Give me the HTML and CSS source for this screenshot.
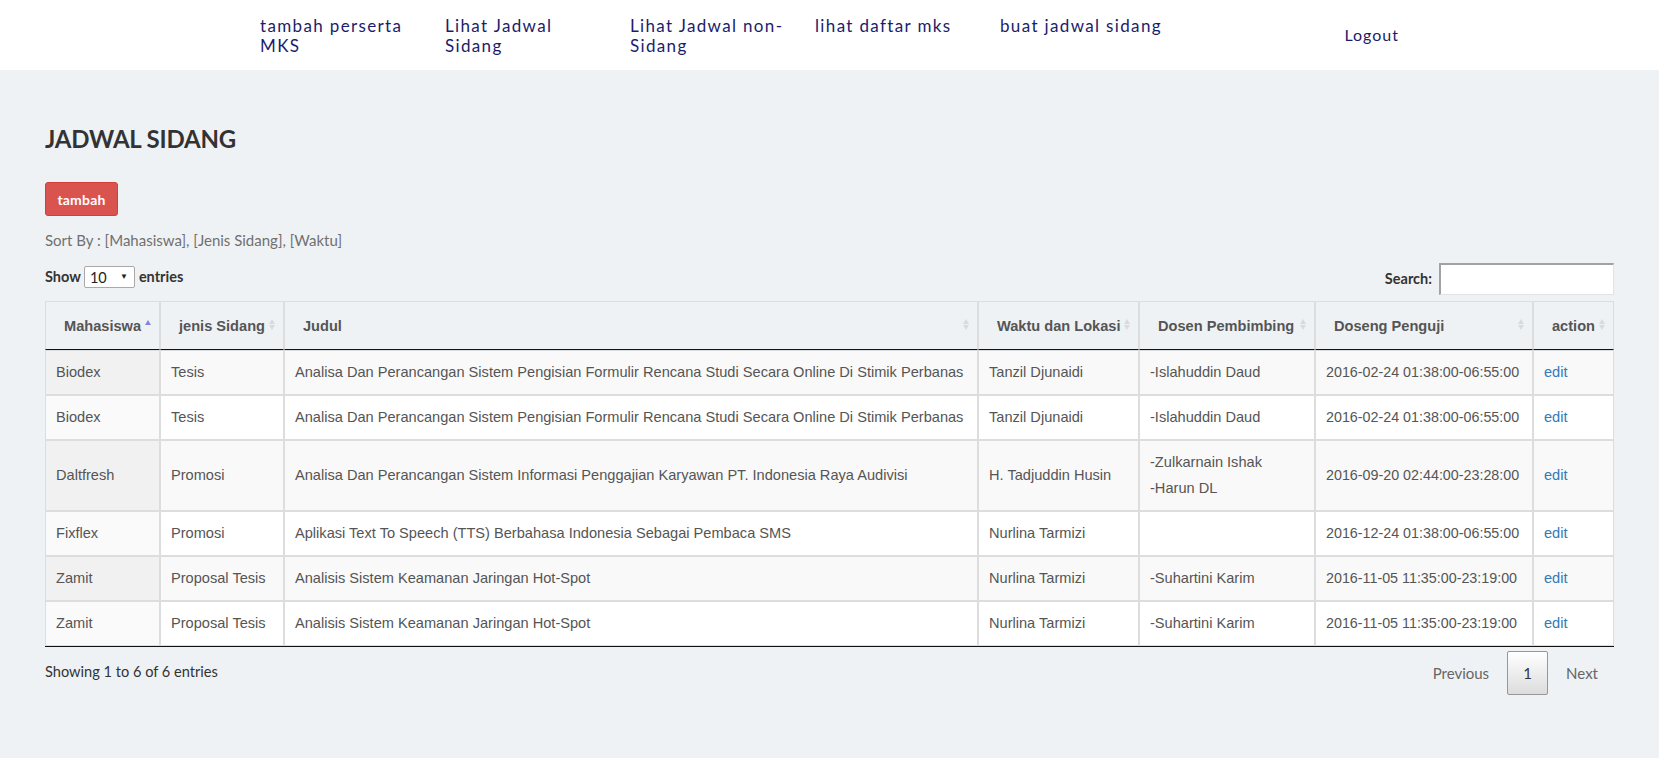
FILE: index.html
```html
<!DOCTYPE html>
<html lang="id">
<head>
<meta charset="utf-8">
<title>Jadwal Sidang</title>
<link rel="stylesheet" href="styles.css">
</head>
<body>
<header class="topbar">
  <ul class="nav">
    <li><a href="#">tambah perserta MKS</a></li>
    <li><a href="#">Lihat Jadwal Sidang</a></li>
    <li><a href="#">Lihat Jadwal non-Sidang</a></li>
    <li><a href="#">lihat daftar mks</a></li>
    <li><a href="#">buat jadwal sidang</a></li>
  </ul>
  <a class="logout" href="#">Logout</a>
</header>

<main class="content">
  <h3 class="title">JADWAL SIDANG</h3>
  <button class="btn-danger" type="button">tambah</button>
  <p class="sortby">Sort By : <a href="#">[Mahasiswa]</a>, <a href="#">[Jenis Sidang]</a>, <a href="#">[Waktu]</a></p>

  <div class="dt-top">
    <label class="dt-length">Show <span class="select-wrap"><select class="dt-select"><option>10</option><option>25</option><option>50</option><option>100</option></select><span class="select-arrow">▼</span></span> entries</label>
    <label class="dt-search">Search:<input type="search" class="search-input"></label>
  </div>

  <table class="dt">
    <thead>
      <tr>
        <th class="c1 sorted">Mahasiswa<span class="sort asc"></span></th>
        <th class="c2">jenis Sidang<span class="sort"></span></th>
        <th class="c3">Judul<span class="sort"></span></th>
        <th class="c4">Waktu dan Lokasi<span class="sort"></span></th>
        <th class="c5">Dosen Pembimbing<span class="sort"></span></th>
        <th class="c6">Doseng Penguji<span class="sort"></span></th>
        <th class="c7">action<span class="sort"></span></th>
      </tr>
    </thead>
    <tbody>
      <tr>
        <td class="s1">Biodex</td>
        <td>Tesis</td>
        <td>Analisa Dan Perancangan Sistem Pengisian Formulir Rencana Studi Secara Online Di Stimik Perbanas</td>
        <td>Tanzil Djunaidi</td>
        <td>-Islahuddin Daud</td>
        <td class="date">2016-02-24 01:38:00-06:55:00</td>
        <td><a class="edit" href="#">edit</a></td>
      </tr>
      <tr>
        <td class="s1">Biodex</td>
        <td>Tesis</td>
        <td>Analisa Dan Perancangan Sistem Pengisian Formulir Rencana Studi Secara Online Di Stimik Perbanas</td>
        <td>Tanzil Djunaidi</td>
        <td>-Islahuddin Daud</td>
        <td class="date">2016-02-24 01:38:00-06:55:00</td>
        <td><a class="edit" href="#">edit</a></td>
      </tr>
      <tr>
        <td class="s1">Daltfresh</td>
        <td>Promosi</td>
        <td>Analisa Dan Perancangan Sistem Informasi Penggajian Karyawan PT. Indonesia Raya Audivisi</td>
        <td>H. Tadjuddin Husin</td>
        <td><div class="name">-Zulkarnain Ishak</div><div class="name next">-Harun DL</div></td>
        <td class="date">2016-09-20 02:44:00-23:28:00</td>
        <td><a class="edit" href="#">edit</a></td>
      </tr>
      <tr>
        <td class="s1">Fixflex</td>
        <td>Promosi</td>
        <td>Aplikasi Text To Speech (TTS) Berbahasa Indonesia Sebagai Pembaca SMS</td>
        <td>Nurlina Tarmizi</td>
        <td></td>
        <td class="date">2016-12-24 01:38:00-06:55:00</td>
        <td><a class="edit" href="#">edit</a></td>
      </tr>
      <tr>
        <td class="s1">Zamit</td>
        <td>Proposal Tesis</td>
        <td>Analisis Sistem Keamanan Jaringan Hot-Spot</td>
        <td>Nurlina Tarmizi</td>
        <td>-Suhartini Karim</td>
        <td class="date">2016-11-05 11:35:00-23:19:00</td>
        <td><a class="edit" href="#">edit</a></td>
      </tr>
      <tr>
        <td class="s1">Zamit</td>
        <td>Proposal Tesis</td>
        <td>Analisis Sistem Keamanan Jaringan Hot-Spot</td>
        <td>Nurlina Tarmizi</td>
        <td>-Suhartini Karim</td>
        <td class="date">2016-11-05 11:35:00-23:19:00</td>
        <td><a class="edit" href="#">edit</a></td>
      </tr>
    </tbody>
  </table>

  <div class="dt-bottom">
    <div class="dt-info">Showing 1 to 6 of 6 entries</div>
    <div class="dt-paginate">
      <a class="page-btn disabled" href="#">Previous</a>
      <a class="page-btn current" href="#">1</a>
      <a class="page-btn disabled" href="#">Next</a>
    </div>
  </div>
</main>
</body>
</html>
```
FILE: styles.css
```css
* { box-sizing: border-box; }

html, body {
  margin: 0;
  padding: 0;
}

body {
  background: #eff2f5;
  font-family: Lato, "Open Sans", "Liberation Sans", sans-serif;
  font-size: 14px;
  line-height: 20px;
  color: #333;
  min-height: 758px;
}

a { text-decoration: none; }

/* ---------- top bar ---------- */
.topbar {
  background: #fff;
  height: 70px;
  display: flex;
  justify-content: space-between;
  padding: 0 260px 0 260px;
}

.nav {
  list-style: none;
  margin: 0;
  padding: 16px 0 0 0;
  display: flex;
}

.nav li {
  width: 185px;
  padding-right: 17px;
}

.nav a,
.logout {
  font-family: Lato, sans-serif;
  font-size: 17px;
  line-height: 20px;
  letter-spacing: 1.35px;
  color: #1c1c6b;
  display: block;
}

.logout {
  padding-top: 25px;
  font-size: 16px;
  letter-spacing: 1px;
}

/* ---------- content ---------- */
.content {
  padding: 56px 45px 40px 45px;
}

.title {
  margin: 0;
  font-family: Lato, sans-serif;
  font-size: 24px;
  line-height: 26px;
  font-weight: 700;
  letter-spacing: -0.2px;
  color: #333;
}

.btn-danger {
  margin-top: 30px;
  display: block;
  height: 34px;
  width: 73px;
  padding: 0;
  border: 1px solid #d43f3a;
  border-radius: 3px;
  background: #d9534f;
  color: #fff;
  font-family: Lato, sans-serif;
  font-size: 14px;
  font-weight: 700;
  letter-spacing: 0.2px;
}

.sortby {
  margin: 14px 0 0 0;
  color: #707070;
  font-size: 15px;
  line-height: 20px;
}

.sortby a { color: #707070; }

/* ---------- datatables top ---------- */
.dt-top {
  margin-top: 13px;
  display: flex;
  justify-content: space-between;
  align-items: center;
  height: 32px;
}

.dt-length,
.dt-search {
  font-weight: 700;
  font-size: 14.5px;
  color: #333;
  display: flex;
  align-items: center;
}

.dt-length { padding-bottom: 4px; }

.select-wrap {
  position: relative;
  display: inline-block;
  margin: 0 4px 0 3px;
}

.dt-select {
  -webkit-appearance: none;
  appearance: none;
  width: 51px;
  height: 22px;
  border: 1px solid #a9a9a9;
  border-radius: 2px;
  background: #fff;
  padding: 0 0 0 5px;
  font-family: Lato, sans-serif;
  font-size: 14.5px;
  color: #222;
  display: block;
}

.select-arrow {
  position: absolute;
  right: 7px;
  top: 4px;
  font-size: 8px;
  line-height: 12px;
  color: #222;
  pointer-events: none;
}

.search-input {
  margin-left: 7px;
  width: 175px;
  height: 32px;
  background: #fff;
  border: 1px solid #e3e3e3;
  border-top: 2px solid #a2a2a2;
  border-left: 2px solid #a2a2a2;
}

/* ---------- table ---------- */
.dt {
  margin-top: 6px;
  width: 100%;
  table-layout: fixed;
  border-collapse: separate;
  border-spacing: 0;
  border-bottom: 1px solid #111;
  font-family: "Liberation Sans", Arial, sans-serif;
  font-size: 14.6px;
}

.dt th,
.dt td {
  border: 1px solid #ddd;
}

.dt th {
  position: relative;
  text-align: left;
  font-weight: 700;
  color: #555;
  padding: 14px 18px 13px 18px;
  line-height: 20px;
  border-bottom-color: #111;
  white-space: nowrap;
}

.c1 { width: 115px; }
.c2 { width: 124px; }
.c3 { width: 694px; }
.c4 { width: 161px; }
.c5 { width: 176px; }
.c6 { width: 218px; }
.c7 { width: 81px; }

.sort {
  position: absolute;
  right: 7px;
  top: 17px;
  width: 7px;
  height: 11px;
}

.sort::before,
.sort::after {
  content: "";
  position: absolute;
  left: 0;
  border-left: 3.5px solid transparent;
  border-right: 3.5px solid transparent;
}

.sort::before {
  top: 0;
  border-bottom: 5px solid #dadada;
}

.sort::after {
  top: 6px;
  border-top: 5px solid #dadada;
}

.sort.asc::before { top: 1px; border-bottom-color: #8383e0; }
.sort.asc::after { display: none; }

.dt td {
  color: #555;
  padding: 11px 10px 12px 10px;
  line-height: 20px;
  vertical-align: middle;
}

.dt td.date {
  font-size: 14.3px;
  white-space: nowrap;
}

.dt tbody tr:nth-child(odd) td { background: #f9f9f9; }
.dt tbody tr:nth-child(even) td { background: #fff; }
.dt tbody tr:nth-child(odd) td.s1 { background: #f1f1f1; }
.dt tbody tr:nth-child(even) td.s1 { background: #fafafa; }

.name.next { margin-top: 6px; }

.edit { color: #337ab7; }

/* ---------- bottom ---------- */
.dt-bottom {
  margin-top: 4px;
  display: flex;
  justify-content: space-between;
  align-items: center;
  height: 44px;
}

.dt-info {
  color: #333;
  font-size: 14.6px;
  padding-bottom: 3px;
}

.dt-paginate {
  display: flex;
  align-items: center;
}

.page-btn {
  display: block;
  padding: 0 15px;
  margin-left: 2px;
  color: #666;
  font-size: 15px;
  line-height: 20px;
  border: 1px solid transparent;
}

.page-btn.current {
  width: 41px;
  height: 44px;
  padding: 0;
  display: flex;
  align-items: center;
  justify-content: center;
  color: #333;
  border: 1px solid #979797;
  border-radius: 2px;
  background: linear-gradient(to bottom, #fff 0%, #dcdcdc 100%);
}
```
